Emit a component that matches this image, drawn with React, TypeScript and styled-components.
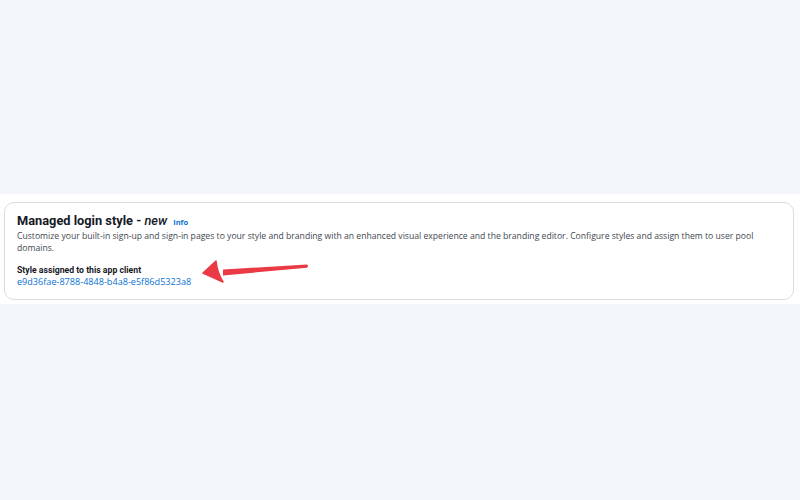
import * as React from "react";
import styled, { createGlobalStyle } from "styled-components";

const GlobalStyle = createGlobalStyle`
  html, body {
    margin: 0;
    padding: 0;
    background: #f2f5f9;
    font-family: "Open Sans", "Noto Sans", Arial, sans-serif;
  }
`;

const Page = styled.div`
  width: 800px;
  height: 500px;
  padding-top: 194px;
  box-sizing: border-box;
`;

const Band = styled.section`
  background: #ffffff;
  padding: 8px 6px 4px 4px;
`;

const Card = styled.div`
  position: relative;
  border: 1px solid #d8dde3;
  border-radius: 10px;
  padding: 9px 12px 12px 12px;
  height: 98px;
  box-sizing: border-box;
`;

const TitleRow = styled.div`
  display: flex;
  align-items: baseline;
  gap: 6px;
`;

const Title = styled.h2`
  margin: 0;
  font-family: Roboto, "Open Sans", Arial, sans-serif;
  font-size: 12.8px;
  font-weight: 700;
  color: #16191f;
  line-height: 18px;

  em {
    font-weight: 500;
  }
`;

const InfoLink = styled.a`
  font-size: 7.5px;
  font-weight: 700;
  color: #0972d3;
  text-decoration: none;
`;

const Description = styled.p`
  margin: 0;
  font-size: 8.65px;
  line-height: 12px;
  color: #414750;
  max-width: 750px;
`;

const Label = styled.div`
  margin-top: 10px;
  font-family: Roboto, "Open Sans", Arial, sans-serif;
  font-size: 8.7px;
  font-weight: 700;
  line-height: 12px;
  color: #16191f;
`;

const IdLink = styled.a`
  display: block;
  font-size: 9.1px;
  line-height: 12px;
  color: #0972d3;
  text-decoration: none;
`;

const Arrow = styled.svg`
  position: absolute;
  left: 196px;
  top: 52px;
`;

export default function App() {
  return (
    <>
      <GlobalStyle />
      <Page>
        <Band>
          <Card>
            <TitleRow>
              <Title>
                Managed login style - <em>new</em>
              </Title>
              <InfoLink href="#">Info</InfoLink>
            </TitleRow>
            <Description>
              Customize your built-in sign-up and sign-in pages to your style and branding with an enhanced visual
              experience and the branding editor. Configure styles and assign them to user pool domains.
            </Description>
            <Label>Style assigned to this app client</Label>
            <IdLink href="#">e9d36fae-8788-4848-b4a8-e5f86d5323a8</IdLink>
            {/* red callout arrow pointing at the label */}
            <Arrow width="120" height="34" viewBox="0 0 120 34">
              <path d="M22 14.6 L106 9.4 Q108 11 106 12.8 L22 20.4 Z" fill="#ea3a45" />
              <path d="M2 18 L15 6 Q16 17 22 27 Z" fill="#ea3a45" stroke="#ea3a45" strokeWidth="1.5" strokeLinejoin="round" />
            </Arrow>
          </Card>
        </Band>
      </Page>
    </>
  );
}
